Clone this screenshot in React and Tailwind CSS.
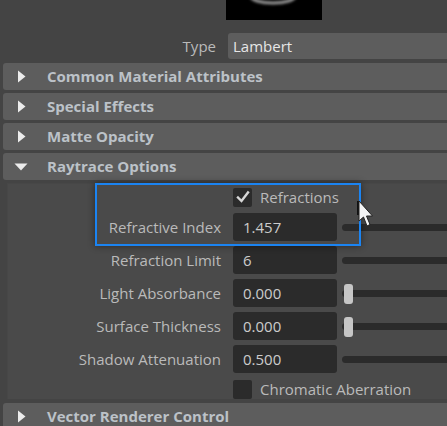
import React from 'react';

const font = { fontFamily: '"Open Sans", "Noto Sans", "Liberation Sans", sans-serif' };

function Triangle({ open }) {
  return open ? (
    <svg width="14" height="10" viewBox="0 0 14 10" className="shrink-0 -ml-[3px]">
      <path d="M0.5 1.5 L13.5 1.5 L7 8.5 Z" fill="#ececec" />
    </svg>
  ) : (
    <svg width="10" height="13" viewBox="0 0 10 13" className="shrink-0">
      <path d="M1 0.5 L8.5 6.5 L1 12.5 Z" fill="#ececec" />
    </svg>
  );
}

function SectionHeader({ title, open }) {
  return (
    <div className="h-[27px] ml-[3px] rounded-l-[3px] bg-[#5d5d5d] flex items-center">
      <div className="w-[44px] flex justify-start pl-[14px]">
        <Triangle open={open} />
      </div>
      <span className="text-[15px] font-bold text-[#bcc2c8] leading-none">{title}</span>
    </div>
  );
}

function Checkbox({ checked, label }) {
  return (
    <div className="flex items-center">
      <div className="w-[19px] h-[19px] rounded-[2px] bg-[#2b2b2b] flex items-center justify-center">
        {checked && (
          <svg width="14" height="14" viewBox="0 0 14 14">
            <path d="M2 7.5 L5.5 11 L12 2.5" stroke="#d8d8d8" strokeWidth="2.4" fill="none" strokeLinecap="square" />
          </svg>
        )}
      </div>
      <span className="ml-[8px] text-[15px] text-[#bababa] leading-none">{label}</span>
    </div>
  );
}

function FieldRow({ label, value, handle }) {
  return (
    <div className="flex items-center h-[28px]">
      <div className="w-[213px] text-right text-[15px] text-[#bababa] leading-none">{label}</div>
      <div className="ml-[12px] w-[104px] h-[28px] rounded-[3px] bg-[#2b2b2b] flex items-center pl-[10px] text-[15px] text-[#cccccc]">
        {value}
      </div>
      <div className="ml-[5px] flex-1 relative h-[28px] flex items-center">
        <div className="w-full h-[7px] rounded-l-full bg-[#2b2b2b]" />
        {handle && (
          <div className="absolute left-[2px] top-[5px] w-[9px] h-[20px] rounded-[3px] bg-[#c6c6c6]" />
        )}
      </div>
    </div>
  );
}

function Cursor() {
  return (
    <svg width="20" height="34" viewBox="0 0 20 34" className="absolute left-[356px] top-[199px]">
      <rect x="1" y="2" width="2.5" height="14" fill="#111" />
      <path d="M3 2 L3 22 L7.5 18 L11 27 L14 25.5 L10.5 17 L16.5 17 Z" fill="#f4f4f4" stroke="#222" strokeWidth="1" />
    </svg>
  );
}

export default function App() {
  return (
    <div className="relative w-[447px] h-[426px] overflow-hidden bg-[#444444]" style={font}>
      {/* swatch */}
      <div className="ml-[226px] w-[96px] h-[20px] bg-black overflow-hidden">
        <svg width="96" height="20" viewBox="0 0 96 20">
          <defs>
            <filter id="glow" x="-50%" y="-50%" width="200%" height="200%">
              <feGaussianBlur stdDeviation="1.6" />
            </filter>
          </defs>
          <ellipse cx="47" cy="-4" rx="22" ry="7" fill="none" stroke="#bdbdbd" strokeWidth="2.5" filter="url(#glow)" />
        </svg>
      </div>

      {/* type */}
      <div className="mt-[13px] flex items-center h-[26px]">
        <div className="w-[216px] text-right text-[15px] text-[#bababa] leading-none">Type</div>
        <div className="ml-[12px] flex-1 h-[26px] rounded-l-[3px] bg-[#5d5d5d] flex items-center pl-[5px] text-[15px] text-[#e6e6e6]">
          Lambert
        </div>
      </div>

      <div className="mt-[4px] flex flex-col gap-[3px]">
        <SectionHeader title="Common Material Attributes" />
        <SectionHeader title="Special Effects" />
        <SectionHeader title="Matte Opacity" />
        <SectionHeader title="Raytrace Options" open />
      </div>

      {/* raytrace panel */}
      <div className="ml-[7px] mt-[3px] h-[216px] bg-[#4a4a4a] border-l border-t border-[#474747] pt-[3px]">
        <div className="h-[20px] flex items-center pl-[225px]">
          <Checkbox checked label="Refractions" />
        </div>
        <div className="mt-[6px] flex flex-col gap-[5px]">
          <FieldRow label="Refractive Index" value="1.457" />
          <FieldRow label="Refraction Limit" value="6" />
          <FieldRow label="Light Absorbance" value="0.000" handle />
          <FieldRow label="Surface Thickness" value="0.000" handle />
          <FieldRow label="Shadow Attenuation" value="0.500" />
        </div>
        <div className="mt-[6px] h-[20px] flex items-center pl-[225px]">
          <Checkbox label="Chromatic Aberration" />
        </div>
      </div>

      <div className="mt-[4px]">
        <SectionHeader title="Vector Renderer Control" />
      </div>

      {/* highlight */}
      <div className="absolute left-[95px] top-[183px] w-[266px] h-[63px] border-2 border-[#1b84f2] shadow-[0_0_7px_rgba(0,0,0,0.45)]" />
      <Cursor />
    </div>
  );
}
